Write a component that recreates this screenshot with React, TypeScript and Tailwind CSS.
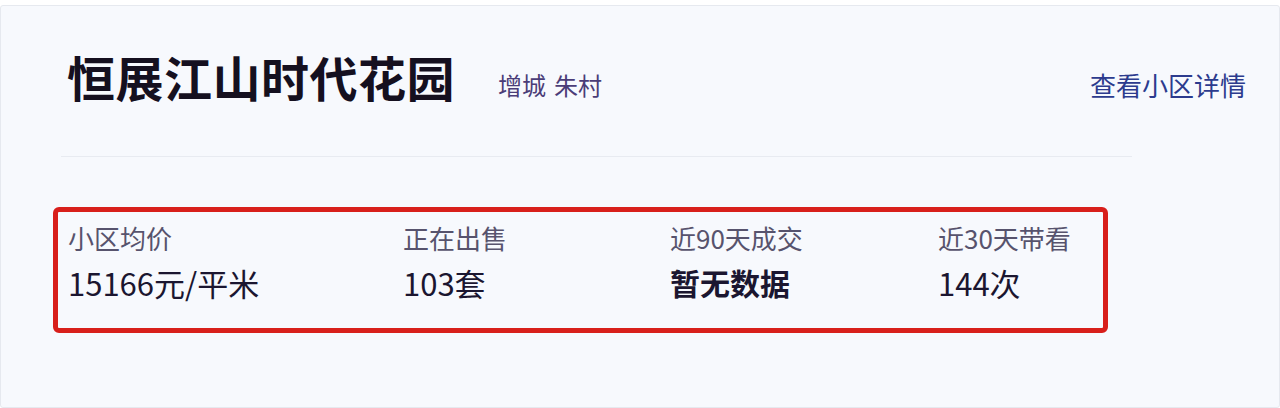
// Community summary card

const font = '"Noto Sans CJK SC", "Noto Sans", sans-serif'

const stats = [
  { label: '小区均价', value: '15166元/平米', width: 'w-[335px]', bold: false },
  { label: '正在出售', value: '103套', width: 'w-[267px]', bold: false },
  { label: '近90天成交', value: '暂无数据', width: 'w-[268px]', bold: true },
  { label: '近30天带看', value: '144次', width: 'w-[150px]', bold: false },
]

export default function App() {
  return (
    <div
      className="w-[1280px] h-[408px] bg-white pt-[5px] overflow-hidden"
      style={{ fontFamily: font }}
    >
      <div className="h-full border border-[#e6e9ef] rounded-[3px] bg-[#f7f9fd] pl-[66px] pr-[33px] pt-[46px]">
        {/* Header */}
        <div className="flex items-end justify-between">
          <div className="flex items-end">
            <h1 className="text-[48px] leading-[48px] font-bold text-[#15101f] tracking-[0.5px]">
              恒展江山时代花园
            </h1>
            <span className="ml-[43px] mb-[3px] text-[24px] leading-[24px] text-[#4b3d78] flex gap-[8px]">
              <span>增城</span>
              <span>朱村</span>
            </span>
          </div>
          <a className="mb-[2px] text-[26px] leading-[26px] text-[#2c3b8e] cursor-pointer">
            查看小区详情
          </a>
        </div>

        <div className="mt-[56px] -ml-[6px] w-[1071px] h-px bg-[#e8ebf1]" />

        {/* Stats box */}
        <div className="mt-[50px] -ml-[14px] w-[1055px] h-[126px] border-[5px] border-[#d81f1b] rounded-[6px] pl-[10px] pt-[13px] flex">
          {stats.map((s) => (
            <div key={s.label} className={s.width}>
              <div className="text-[26px] leading-[26px] text-[#57536d]">
                {s.label}
              </div>
              <div
                className={`mt-[16px] leading-[31px] text-[#1b1630] ${
                  s.bold ? 'text-[30px] font-semibold' : 'text-[31px]'
                }`}
              >
                {s.value}
              </div>
            </div>
          ))}
        </div>
      </div>
    </div>
  )
}
